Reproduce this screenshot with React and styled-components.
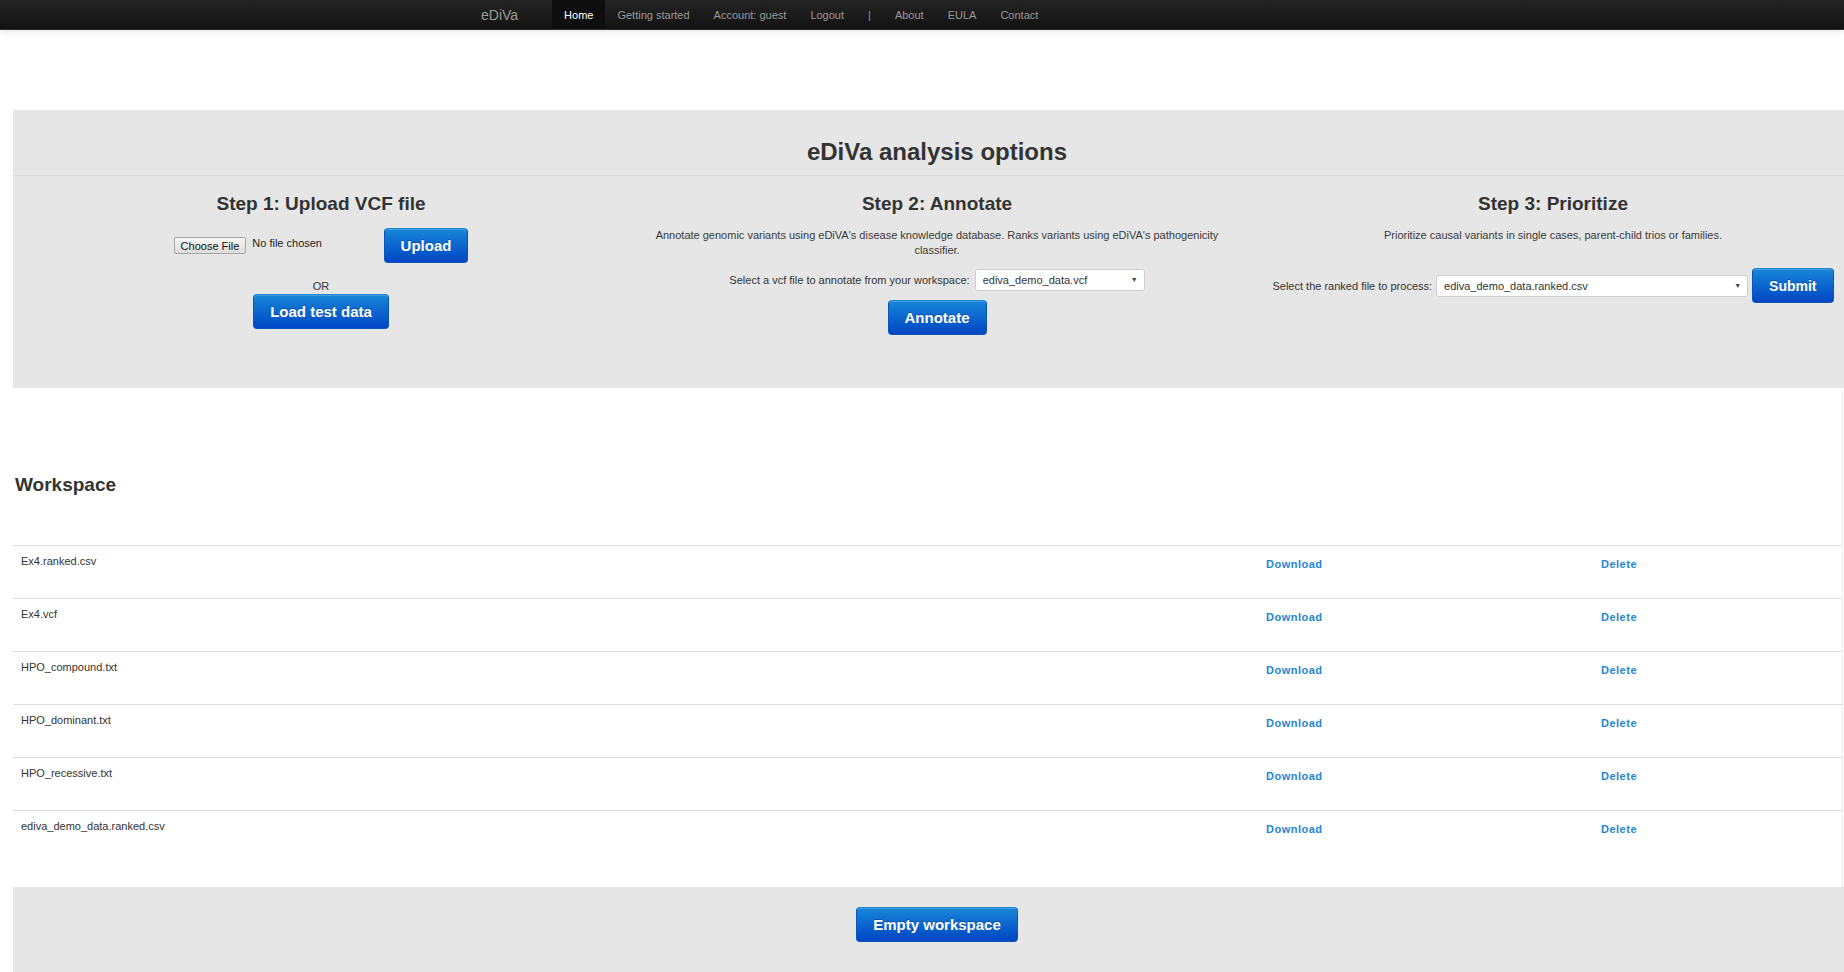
import React from 'react';
import styled, { createGlobalStyle } from 'styled-components';

const GlobalStyle = createGlobalStyle`
  html, body {
    margin: 0;
    padding: 0;
    background: #fff;
    overflow-x: hidden;
  }
  body {
    font-family: 'Liberation Sans', Arial, sans-serif;
    font-size: 11px;
    color: #333;
  }
  * { box-sizing: border-box; }
`;

// top navigation bar
const NavBar = styled.div`
  height: 30px;
  background: linear-gradient(#242424, #121212);
  border-bottom: 1px solid #2c2c2c;
  box-shadow: 0 1px 8px rgba(0, 0, 0, 0.12);
`;

const NavInner = styled.div`
  width: 940px;
  height: 100%;
  margin: 0 auto;
  display: flex;
  align-items: stretch;
`;

const Brand = styled.a`
  display: flex;
  align-items: center;
  padding: 0 34px 0 29px;
  font-size: 14px;
  color: #9a9a9a;
  text-decoration: none;
`;

const NavItem = styled.a`
  display: flex;
  align-items: center;
  padding: 0 12px;
  font-size: 11px;
  color: ${(p) => (p.$active ? '#fff' : '#999')};
  background: ${(p) => (p.$active ? '#0e0e0e' : 'transparent')};
  text-decoration: none;
`;

const Page = styled.div`
  padding-left: 13px;
  padding-top: 80px;
  width: 1861px;
`;

// analysis options block
const Jumbotron = styled.section`
  background: #e6e6e6;
  padding: 27px 0 53px;
`;

const JumboTitle = styled.h1`
  margin: 0;
  padding-bottom: 8px;
  border-bottom: 1px solid #d8d8d8;
  font-size: 24px;
  line-height: 30px;
  font-weight: bold;
  text-align: center;
  color: #333;
`;

const Steps = styled.div`
  display: grid;
  grid-template-columns: repeat(3, 616px);
  padding-top: 16px;
`;

const Step = styled.div`
  display: flex;
  flex-direction: column;
  align-items: center;
  text-align: center;
  padding: 0 20px;
`;

const StepTitle = styled.h3`
  margin: 0 0 12px;
  font-size: 19px;
  line-height: 24px;
  font-weight: bold;
  color: #333;
`;

const StepText = styled.p`
  margin: 0 0 ${(p) => p.$gap || 11}px;
  font-size: 11px;
  line-height: 15px;
  color: #3a3a3a;
`;

const FormRow = styled.div`
  display: flex;
  align-items: center;
  justify-content: center;
  gap: ${(p) => p.$gap || 4}px;
  white-space: nowrap;
`;

const Label = styled.span`
  font-size: 11px;
  color: #333;
`;

const FileInput = styled.div`
  width: 205px;
  display: flex;
  align-items: center;
  gap: 6px;
`;

const ChooseButton = styled.span`
  height: 17px;
  padding: 0 6px;
  display: flex;
  align-items: center;
  border: 1px solid #a5a5a5;
  border-radius: 2px;
  background: linear-gradient(#f7f7f7, #dddddd);
  font-size: 11px;
  color: #111;
`;

const NoFile = styled.span`
  font-size: 11px;
  color: #222;
  margin-top: -6px;
`;

const BlueButton = styled.button`
  height: 35px;
  padding: 0 16px;
  margin-top: ${(p) => p.$top || 0}px;
  border: 1px solid #0a56b8;
  border-top-color: #1d8ad8;
  border-radius: 4px;
  background: linear-gradient(#1786d8, #0046c4);
  box-shadow: inset 0 1px 0 rgba(255, 255, 255, 0.18);
  color: #fff;
  font-family: 'Liberation Sans', Arial, sans-serif;
  font-size: ${(p) => p.$size || 15}px;
  font-weight: bold;
  text-shadow: 0 -1px 0 rgba(0, 0, 0, 0.25);
  cursor: pointer;
`;

const Or = styled.div`
  margin-top: 16px;
  font-size: 11px;
  line-height: 15px;
  color: #333;
`;

const Select = styled.div`
  position: relative;
  width: ${(p) => p.$width}px;
  height: 22px;
  padding: 0 18px 0 7px;
  display: flex;
  align-items: center;
  background: #fff;
  border: 1px solid #cfcfcf;
  border-radius: 3px;
  font-size: 11px;
  color: #333;
  text-align: left;

  &::after {
    content: '▼';
    position: absolute;
    right: 6px;
    top: 6px;
    font-size: 7px;
    color: #444;
  }
`;

// workspace listing
const Workspace = styled.section`
  width: 1830px;
  padding: 85px 0 24px;
  border-right: 1px solid #eeeeee;
`;

const WorkspaceTitle = styled.h3`
  margin: 0 0 48px;
  padding-left: 2px;
  font-size: 19px;
  line-height: 24px;
  font-weight: bold;
  color: #333;
`;

const FileRow = styled.div`
  display: grid;
  grid-template-columns: 1245px 335px 1fr;
  height: 53px;
  border-top: 1px solid #dddddd;
`;

const FileName = styled.div`
  padding: 7px 8px;
  font-size: 11px;
  line-height: 16px;
  color: #333;
`;

const ActionCell = styled.div`
  padding: 10px 8px;
  line-height: 16px;
`;

const ActionLink = styled.a`
  font-size: 11px;
  font-weight: bold;
  letter-spacing: 0.5px;
  color: #1f86d5;
  text-decoration: none;
`;

const Footer = styled.section`
  background: #e6e6e6;
  padding: 20px 0 40px;
  text-align: center;
`;

const files = [
  'Ex4.ranked.csv',
  'Ex4.vcf',
  'HPO_compound.txt',
  'HPO_dominant.txt',
  'HPO_recessive.txt',
  'ediva_demo_data.ranked.csv',
];

const navLinks = ['Home', 'Getting started', 'Account: guest', 'Logout', '|', 'About', 'EULA', 'Contact'];

const App = () => {
  return (
    <>
      <GlobalStyle />
      <NavBar>
        <NavInner>
          <Brand href="#">eDiVa</Brand>
          {navLinks.map((link, i) => (
            <NavItem key={link} href="#" $active={i === 0}>
              {link}
            </NavItem>
          ))}
        </NavInner>
      </NavBar>

      <Page>
        <Jumbotron>
          <JumboTitle>eDiVa analysis options</JumboTitle>
          <Steps>
            <Step>
              <StepTitle>Step 1: Upload VCF file</StepTitle>
              <FormRow $gap={5}>
                <FileInput>
                  <ChooseButton>Choose File</ChooseButton>
                  <NoFile>No file chosen</NoFile>
                </FileInput>
                <BlueButton>Upload</BlueButton>
              </FormRow>
              <Or>OR</Or>
              <BlueButton>Load test data</BlueButton>
            </Step>

            <Step>
              <StepTitle>Step 2: Annotate</StepTitle>
              <StepText>
                Annotate genomic variants using eDiVA's disease knowledge database. Ranks variants using
                eDiVA's pathogenicity classifier.
              </StepText>
              <FormRow $gap={5}>
                <Label>Select a vcf file to annotate from your workspace:</Label>
                <Select $width={170}>ediva_demo_data.vcf</Select>
              </FormRow>
              <BlueButton $top={9}>Annotate</BlueButton>
            </Step>

            <Step>
              <StepTitle>Step 3: Prioritize</StepTitle>
              <StepText $gap={25}>
                Prioritize causal variants in single cases, parent-child trios or families.
              </StepText>
              <FormRow $gap={4}>
                <Label>Select the ranked file to process:</Label>
                <Select $width={312}>ediva_demo_data.ranked.csv</Select>
                <BlueButton $size={14}>Submit</BlueButton>
              </FormRow>
            </Step>
          </Steps>
        </Jumbotron>

        <Workspace>
          <WorkspaceTitle>Workspace</WorkspaceTitle>
          {files.map((name) => (
            <FileRow key={name}>
              <FileName>{name}</FileName>
              <ActionCell>
                <ActionLink href="#">Download</ActionLink>
              </ActionCell>
              <ActionCell>
                <ActionLink href="#">Delete</ActionLink>
              </ActionCell>
            </FileRow>
          ))}
        </Workspace>

        <Footer>
          <BlueButton>Empty workspace</BlueButton>
        </Footer>
      </Page>
    </>
  );
};

export default App;
